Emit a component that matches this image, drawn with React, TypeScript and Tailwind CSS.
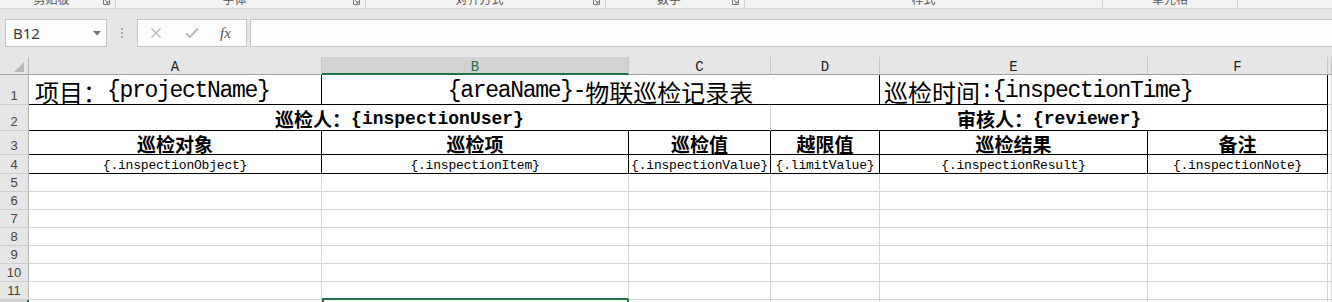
import React from "react"

const cjkRe = /[\u3000-\u9fff\uff00-\uffef]/

// split a string into CJK / latin runs so each gets its own font
function Mixed({ text, cjk, lat }: { text: string; cjk: string; lat: string }) {
  const runs: { s: string; c: boolean }[] = []
  for (const ch of text) {
    const c = cjkRe.test(ch)
    const last = runs[runs.length - 1]
    if (last && last.c === c) last.s += ch
    else runs.push({ s: ch, c })
  }
  return (
    <>
      {runs.map((r, i) => (
        <span key={i} className={r.c ? cjk : lat}>
          {r.s}
        </span>
      ))}
    </>
  )
}

const spans: Record<number, string> = { 1: "", 2: "col-span-2", 3: "col-span-3" }

function Cell({
  span = 1,
  className = "",
  children,
}: {
  span?: number
  className?: string
  children?: React.ReactNode
}) {
  return (
    <div className={`${spans[span]} flex min-w-0 overflow-hidden whitespace-nowrap leading-none ${className}`}>
      {children}
    </div>
  )
}

const gray = "border-r border-b border-[#d4d4d4] bg-white"
const black = "border-r border-b border-black bg-white"

const r1cjk = "font-['Noto_Sans_CJK_SC',sans-serif] text-[24px] leading-none"
const r1lat = "font-['Liberation_Mono',monospace] text-[23px] tracking-[-1.3px] leading-none"
const r2cjk = "font-['Noto_Sans_CJK_SC',sans-serif] text-[19px] font-bold leading-none"
const r2lat = "font-['Liberation_Mono',monospace] text-[18px] font-bold leading-none"
const r3cjk = "font-['Noto_Sans_CJK_SC',sans-serif] text-[19px] font-bold leading-none"
const r4lat = "font-['Liberation_Mono',monospace] text-[13px] tracking-[-0.2px] leading-none"

const ribbonGroups = [
  { w: "w-[116px]", label: "剪贴板", launcher: true },
  { w: "w-[250px]", label: "字体", launcher: true },
  { w: "w-[240px]", label: "对齐方式", launcher: true },
  { w: "w-[139px]", label: "数字", launcher: true },
  { w: "w-[358px]", label: "样式", launcher: false },
  { w: "w-[135px]", label: "单元格", launcher: false },
]

function Launcher() {
  return (
    <svg width="7" height="5" viewBox="0 0 7 5" className="shrink-0">
      <path d="M0.5 0V4.5H6.5V0" fill="none" stroke="#7a7a7a" strokeWidth="1" />
      <path d="M2 0L5 3M5 1V3H3" fill="none" stroke="#7a7a7a" strokeWidth="1" />
    </svg>
  )
}

function RowHead({ n, active = false }: { n?: number; active?: boolean }) {
  return (
    <div
      className={`flex items-end justify-center border-b border-[#cfcfcf] pb-[2px] font-['Liberation_Sans',sans-serif] text-[13px] leading-none text-[#444] ${
        active ? "border-r-2 border-r-[#217346] bg-[#d2d2d2]" : "border-r border-r-[#b5b5b5] bg-[#e6e6e6]"
      }`}
    >
      {n}
    </div>
  )
}

function ColHead({ label, active = false }: { label?: string; active?: boolean }) {
  return (
    <div
      className={`flex items-center justify-center border-r border-r-[#c6c6c6] pt-[3px] font-['Liberation_Mono',monospace] text-[14px] leading-none ${
        active ? "border-b-2 border-b-[#217346] bg-[#d2d2d2] text-[#217346]" : "border-b border-b-[#a0a0a0] bg-[#e6e6e6] text-[#222]"
      }`}
    >
      {label}
    </div>
  )
}

export default function App() {
  const emptyRows = [5, 6, 7, 8, 9, 10, 11]

  return (
    <div className="h-[302px] w-[1332px] overflow-hidden bg-[#e6e6e6]">
      {/* Ribbon group labels, cut off at the top */}
      <div className="flex h-[9px] overflow-hidden border-b border-[#d5d5d5] bg-[#f3f3f3]">
        {ribbonGroups.map((g) => (
          <div key={g.label} className={`${g.w} flex h-[8px] shrink-0 border-r border-[#d0d0d0]`}>
            <div className="flex flex-1 justify-center">
              <span className="-mt-[7px] font-['Noto_Sans_CJK_SC',sans-serif] text-[12px] leading-[12px] text-[#5a5a5a]">
                {g.label}
              </span>
            </div>
            {g.launcher && (
              <div className="flex pr-[5px]">
                <Launcher />
              </div>
            )}
          </div>
        ))}
        <div className="flex-1" />
      </div>

      {/* Formula bar */}
      <div className="flex h-[48px] items-start bg-[#e6e6e6] pt-[10px]">
        <div className="ml-[5px] flex h-[28px] w-[102px] items-center justify-between border border-[#c6c6c6] bg-[#fdfdfd] pl-[7px] pr-[5px]">
          <span className="font-['Noto_Sans',sans-serif] text-[15px] leading-none text-[#3c3c3c]">B12</span>
          <svg width="8" height="5" viewBox="0 0 8 5">
            <path d="M0 0H8L4 4.5Z" fill="#707070" />
          </svg>
        </div>
        <div className="flex w-[30px] flex-col items-center gap-[2px] pt-[9px]">
          <div className="h-[2px] w-[2px] bg-[#a8a8a8]" />
          <div className="h-[2px] w-[2px] bg-[#a8a8a8]" />
          <div className="h-[2px] w-[2px] bg-[#a8a8a8]" />
        </div>
        <div className="flex h-[28px] w-[110px] items-center border border-[#c6c6c6] bg-[#fdfdfd] pl-[12px]">
          <svg width="12" height="12" viewBox="0 0 12 12">
            <path d="M1.5 1.5L10.5 10.5M10.5 1.5L1.5 10.5" stroke="#b9b9b9" strokeWidth="1.4" />
          </svg>
          <svg width="14" height="12" viewBox="0 0 14 12" className="ml-[23px]">
            <path d="M1 6.5L5 10L13 1.5" fill="none" stroke="#b9b9b9" strokeWidth="2" />
          </svg>
          <span className="ml-[21px] font-['Liberation_Serif',serif] text-[15px] italic leading-none text-[#555]">
            fx
          </span>
        </div>
        <div className="ml-[3px] h-[28px] flex-1 border border-r-0 border-[#c6c6c6] bg-[#fdfdfd]" />
      </div>

      {/* Sheet grid */}
      <div className="grid h-[245px] grid-cols-[29px_293px_307px_142px_109px_268px_180px_1fr] grid-rows-[18px_30px_26px_24px_19px_18px_18px_18px_18px_18px_18px_18px_1fr]">
        {/* column headers */}
        <div className="flex items-end justify-end border-r border-b border-r-[#b5b5b5] border-b-[#a0a0a0] bg-[#e6e6e6] pb-[2px] pr-[4px]">
          <svg width="10" height="10" viewBox="0 0 10 10">
            <path d="M10 0V10H0Z" fill="#b8b8b8" />
          </svg>
        </div>
        <ColHead label="A" />
        <ColHead label="B" active />
        <ColHead label="C" />
        <ColHead label="D" />
        <ColHead label="E" />
        <ColHead label="F" />
        <ColHead />

        {/* row 1 */}
        <RowHead n={1} />
        <Cell className={`${black} items-center pl-[6px] pt-[4px]`}>
          <Mixed text="项目：{projectName}" cjk={r1cjk} lat={r1lat} />
        </Cell>
        <Cell span={3} className={`${black} items-center justify-center pt-[4px]`}>
          <Mixed text="{areaName}-物联巡检记录表" cjk={r1cjk} lat={r1lat} />
        </Cell>
        <Cell span={2} className={`${black} items-center pl-[4px] pt-[4px]`}>
          <Mixed text="巡检时间:{inspectionTime}" cjk={r1cjk} lat={r1lat} />
        </Cell>
        <Cell className={gray} />

        {/* row 2 */}
        <RowHead n={2} />
        <Cell span={3} className="items-center justify-center border-r border-b border-r-[#d4d4d4] border-b-black bg-white pt-[2px]">
          <Mixed text="巡检人：{inspectionUser}" cjk={r2cjk} lat={r2lat} />
        </Cell>
        <Cell span={3} className={`${black} items-center justify-center pt-[2px]`}>
          <Mixed text="审核人：{reviewer}" cjk={r2cjk} lat={r2lat} />
        </Cell>
        <Cell className={gray} />

        {/* row 3 */}
        <RowHead n={3} />
        {["巡检对象", "巡检项", "巡检值", "越限值", "巡检结果", "备注"].map((h) => (
          <Cell key={h} className={`${black} items-center justify-center pt-[2px]`}>
            <span className={r3cjk}>{h}</span>
          </Cell>
        ))}
        <Cell className={gray} />

        {/* row 4 */}
        <RowHead n={4} />
        {[
          "{.inspectionObject}",
          "{.inspectionItem}",
          "{.inspectionValue}",
          "{.limitValue}",
          "{.inspectionResult}",
          "{.inspectionNote}",
        ].map((v) => (
          <Cell key={v} className={`${black} items-center justify-center pt-[2px]`}>
            <span className={r4lat}>{v}</span>
          </Cell>
        ))}
        <Cell className={gray} />

        {/* empty rows */}
        {emptyRows.map((n) => (
          <React.Fragment key={n}>
            <RowHead n={n} />
            <Cell className={gray} />
            <Cell
              className={
                n === 11
                  ? "border-r border-b-2 border-r-[#d4d4d4] border-b-[#217346] bg-white"
                  : gray
              }
            />
            <Cell className={gray} />
            <Cell className={gray} />
            <Cell className={gray} />
            <Cell className={gray} />
            <Cell className={gray} />
          </React.Fragment>
        ))}

        {/* row 12 (selected cell B12, mostly cut off) */}
        <RowHead n={12} active />
        <Cell className={gray} />
        <Cell className="border-x-2 border-[#217346] bg-white" />
        <Cell className={gray} />
        <Cell className={gray} />
        <Cell className={gray} />
        <Cell className={gray} />
        <Cell className={gray} />
      </div>
    </div>
  )
}
